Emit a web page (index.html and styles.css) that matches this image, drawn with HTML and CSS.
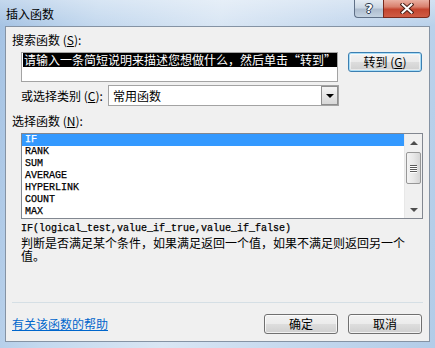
FILE: index.html
```html
<!DOCTYPE html>
<html lang="zh-CN">
<head>
<meta charset="utf-8">
<title>插入函数</title>
<link rel="stylesheet" href="styles.css">
</head>
<body>
<div class="frame">
  <div class="titlebar">
    <div class="title">插入函数</div>
    <div class="caption-btns">
      <div class="cbtn help"><span class="q">?</span></div>
      <div class="cbtn close">
        <svg width="14" height="11" viewBox="0 0 14 11">
          <path d="M2.5 1.5 L11.5 9.5 M11.5 1.5 L2.5 9.5" stroke="#4a2018" stroke-width="4" stroke-linecap="square" fill="none"/>
          <path d="M2.5 1.5 L11.5 9.5 M11.5 1.5 L2.5 9.5" stroke="#ffffff" stroke-width="2" stroke-linecap="square" fill="none"/>
        </svg>
      </div>
    </div>
  </div>
  <div class="client">
    <div class="label lbl-search">搜索函数 (<u>S</u>):</div>
    <div class="search-row">
      <div class="search-box"><span class="sel">请输入一条简短说明来描述您想做什么，然后单击<span class="fwq oq">“</span>转到<span class="fwq cq">”</span></span></div>
      <div class="btn btn-focus">转到 (<u>G</u>)</div>
    </div>
    <div class="cat-row">
      <div class="label cat-label">或选择类别 (<u>C</u>):</div>
      <div class="combo">
        <span class="combo-text">常用函数</span>
        <div class="combo-btn"><span class="tri-down"></span></div>
      </div>
    </div>
    <div class="label lbl-func">选择函数 (<u>N</u>):</div>
    <div class="listbox">
      <div class="items">
        <div class="item selected">IF</div>
        <div class="item">RANK</div>
        <div class="item">SUM</div>
        <div class="item">AVERAGE</div>
        <div class="item">HYPERLINK</div>
        <div class="item">COUNT</div>
        <div class="item">MAX</div>
      </div>
      <div class="vscroll">
        <div class="arrow"><span class="sa-up"></span></div>
        <div class="thumb"><span class="grip"></span><span class="grip"></span><span class="grip"></span><span class="grip"></span></div>
        <div class="track"></div>
        <div class="arrow"><span class="sa-down"></span></div>
      </div>
    </div>
    <div class="syntax">IF(logical_test,value_if_true,value_if_false)</div>
    <div class="desc">判断是否满足某个条件，如果满足返回一个值，如果不满足则返回另一个值。</div>
    <div class="sep"></div>
    <div class="bottom-row">
      <a class="help-link" href="#">有关该函数的帮助</a>
      <div class="btn">确定</div>
      <div class="btn">取消</div>
    </div>
  </div>
</div>
</body>
</html>
```

FILE: styles.css
```css
* { box-sizing: border-box; }
html, body { margin: 0; padding: 0; }
body {
  width: 435px;
  height: 348px;
  overflow: hidden;
  font-family: "Noto Sans CJK SC", "DejaVu Sans", sans-serif;
  font-size: 12px;
  color: #000;
}
.frame {
  width: 435px;
  height: 348px;
  background:
    linear-gradient(to bottom, rgba(255,255,255,0.35), rgba(255,255,255,0) 26px),
    linear-gradient(100deg, #a4c2e3 0%, #c3d8ee 20%, #d9e6f4 45%, #c6d9ee 70%, #b2cce8 100%);
  display: flex;
  flex-direction: column;
}
.titlebar {
  height: 26px;
  display: flex;
  align-items: flex-start;
}
.title {
  padding: 6px 0 0 6px;
  line-height: 16px;
  font-size: 12px;
  color: #000;
}
.caption-btns {
  margin-left: auto;
  margin-right: 5px;
  display: flex;
  height: 18px;
}
.cbtn {
  height: 18px;
  display: flex;
  align-items: center;
  justify-content: center;
  border: 1px solid #5f7087;
  border-top: none;
}
.help {
  width: 29px;
  border-radius: 0 0 0 4px;
  border-right: none;
  background: linear-gradient(to bottom, #e3ebf3 0%, #cbd7e4 45%, #aebdcf 55%, #c4d3e2 100%);
}
.q {
  font-family: "DejaVu Sans", sans-serif;
  font-weight: bold;
  font-size: 13px;
  line-height: 13px;
  color: #fff;
  text-shadow: 0 0 1px #2b3b50, 1px 0 0 #2b3b50, -1px 0 0 #2b3b50, 0 1px 0 #2b3b50, 0 -1px 0 #2b3b50;
}
.close {
  width: 47px;
  border-color: #7a2a1d;
  border-radius: 0 0 4px 0;
  background: linear-gradient(to bottom, #eab0a2 0%, #d9806d 40%, #c4452f 55%, #cf5c45 100%);
}
.client {
  margin-left: 5px;
  width: 425px;
  height: 316px;
  background: #f0f0f0;
  border: 1px solid #8593a4;
  padding: 0 7px 0 6px;
  display: flex;
  flex-direction: column;
}
.label {
  line-height: 14px;
  height: 14px;
  white-space: nowrap;
}
.lbl-search { margin-top: 6px; }
.search-row {
  margin-top: 5px;
  margin-left: 9px;
  display: flex;
  align-items: flex-start;
}
.search-box {
  width: 317px;
  height: 30px;
  background: #fff;
  border: 1px solid #a3a3a3;
  padding: 0 0 0 1px;
  line-height: 14px;
  overflow: hidden;
  white-space: nowrap;
}
.sel {
  background: #000;
  color: #fff;
  display: inline-block;
  padding: 0 1px;
}
.fwq {
  display: inline-block;
  width: 12px;
}
.oq { text-align: right; }
.cq { text-align: left; }
.btn {
  width: 74px;
  height: 20px;
  border: 1px solid #707070;
  border-radius: 3px;
  background: linear-gradient(to bottom, #f2f2f2 0%, #ebebeb 49%, #dddddd 51%, #cfcfcf 100%);
  display: flex;
  align-items: center;
  justify-content: center;
  line-height: 14px;
  box-shadow: inset 0 0 0 1px rgba(255,255,255,0.7);
  white-space: nowrap;
}
.btn-focus {
  margin-left: 10px;
  border-color: #3c7fb1;
  box-shadow: inset 0 0 0 1px #a7dcf7, inset 0 0 0 2px rgba(255,255,255,0.5);
  background: linear-gradient(to bottom, #f2f2f2 0%, #ebebeb 49%, #dddddd 51%, #cfcfcf 100%);
}
.cat-row {
  margin-top: 3px;
  margin-left: 9px;
  display: flex;
  align-items: center;
  height: 21px;
}
.cat-label { width: 87px; }
.combo {
  width: 231px;
  height: 21px;
  background: #fff;
  border: 1px solid #a3a3a3;
  display: flex;
  align-items: center;
}
.combo-text {
  padding-left: 4px;
  line-height: 14px;
}
.combo-btn {
  margin-left: auto;
  width: 17px;
  height: 19px;
  border: 1px solid #8e8e8e;
  background: linear-gradient(to bottom, #f4f4f4, #d8d8d8);
  display: flex;
  align-items: center;
  justify-content: center;
}
.tri-down {
  width: 0; height: 0;
  border-left: 4px solid transparent;
  border-right: 4px solid transparent;
  border-top: 4px solid #000;
  margin-top: 1px;
}
.lbl-func { margin-top: 8px; }
.listbox {
  margin-top: 5px;
  margin-left: 9px;
  width: 402px;
  height: 86px;
  border: 1px solid #828790;
  background: #fff;
  display: flex;
}
.items {
  flex: 1;
  font-family: "Liberation Mono", monospace;
  font-size: 10px;
  -webkit-text-stroke: 0.25px #000;
}
.item {
  height: 12px;
  line-height: 12px;
  padding-left: 3px;
  white-space: nowrap;
}
.item.selected {
  background: #3399ff;
  color: #fff;
  -webkit-text-stroke: 0.25px #fff;
}
.vscroll {
  width: 18px;
  background: #f0f0f0;
  border-left: 1px solid #e8e8e8;
  display: flex;
  flex-direction: column;
  align-items: center;
}
.arrow {
  height: 17px;
  width: 17px;
  display: flex;
  align-items: center;
  justify-content: center;
}
.sa-up {
  width: 0; height: 0;
  border-left: 4px solid transparent;
  border-right: 4px solid transparent;
  border-bottom: 4px solid #4d4d4d;
}
.sa-down {
  width: 0; height: 0;
  border-left: 4px solid transparent;
  border-right: 4px solid transparent;
  border-top: 4px solid #4d4d4d;
}
.thumb {
  width: 15px;
  height: 32px;
  margin-top: 1px;
  border: 1px solid #979797;
  border-radius: 2px;
  background: linear-gradient(to right, #f3f3f3 0%, #e8e8e8 50%, #d6d6d6 100%);
  display: flex;
  flex-direction: column;
  align-items: center;
  justify-content: center;
  gap: 1px;
}
.grip {
  width: 7px;
  height: 1px;
  background: #5a5a5a;
  box-shadow: 0 1px 0 #fff;
}
.track { flex: 1; }
.syntax {
  margin-top: 4px;
  margin-left: 9px;
  font-family: "Liberation Mono", monospace;
  font-size: 10px;
  line-height: 12px;
  height: 12px;
  white-space: nowrap;
  -webkit-text-stroke: 0.25px #000;
}
.desc {
  margin-left: 9px;
  width: 390px;
  font-size: 12px;
  line-height: 13px;
  margin-top: 1px;
}
.sep {
  margin-top: 40px;
  height: 1px;
  background: #d5dfe5;
  width: 411px;
}
.bottom-row {
  margin-top: 11px;
  display: flex;
  align-items: center;
  gap: 10px;
  height: 20px;
}
.help-link {
  color: #0066cc;
  text-decoration: underline;
  line-height: 14px;
  margin-right: auto;
}
```
